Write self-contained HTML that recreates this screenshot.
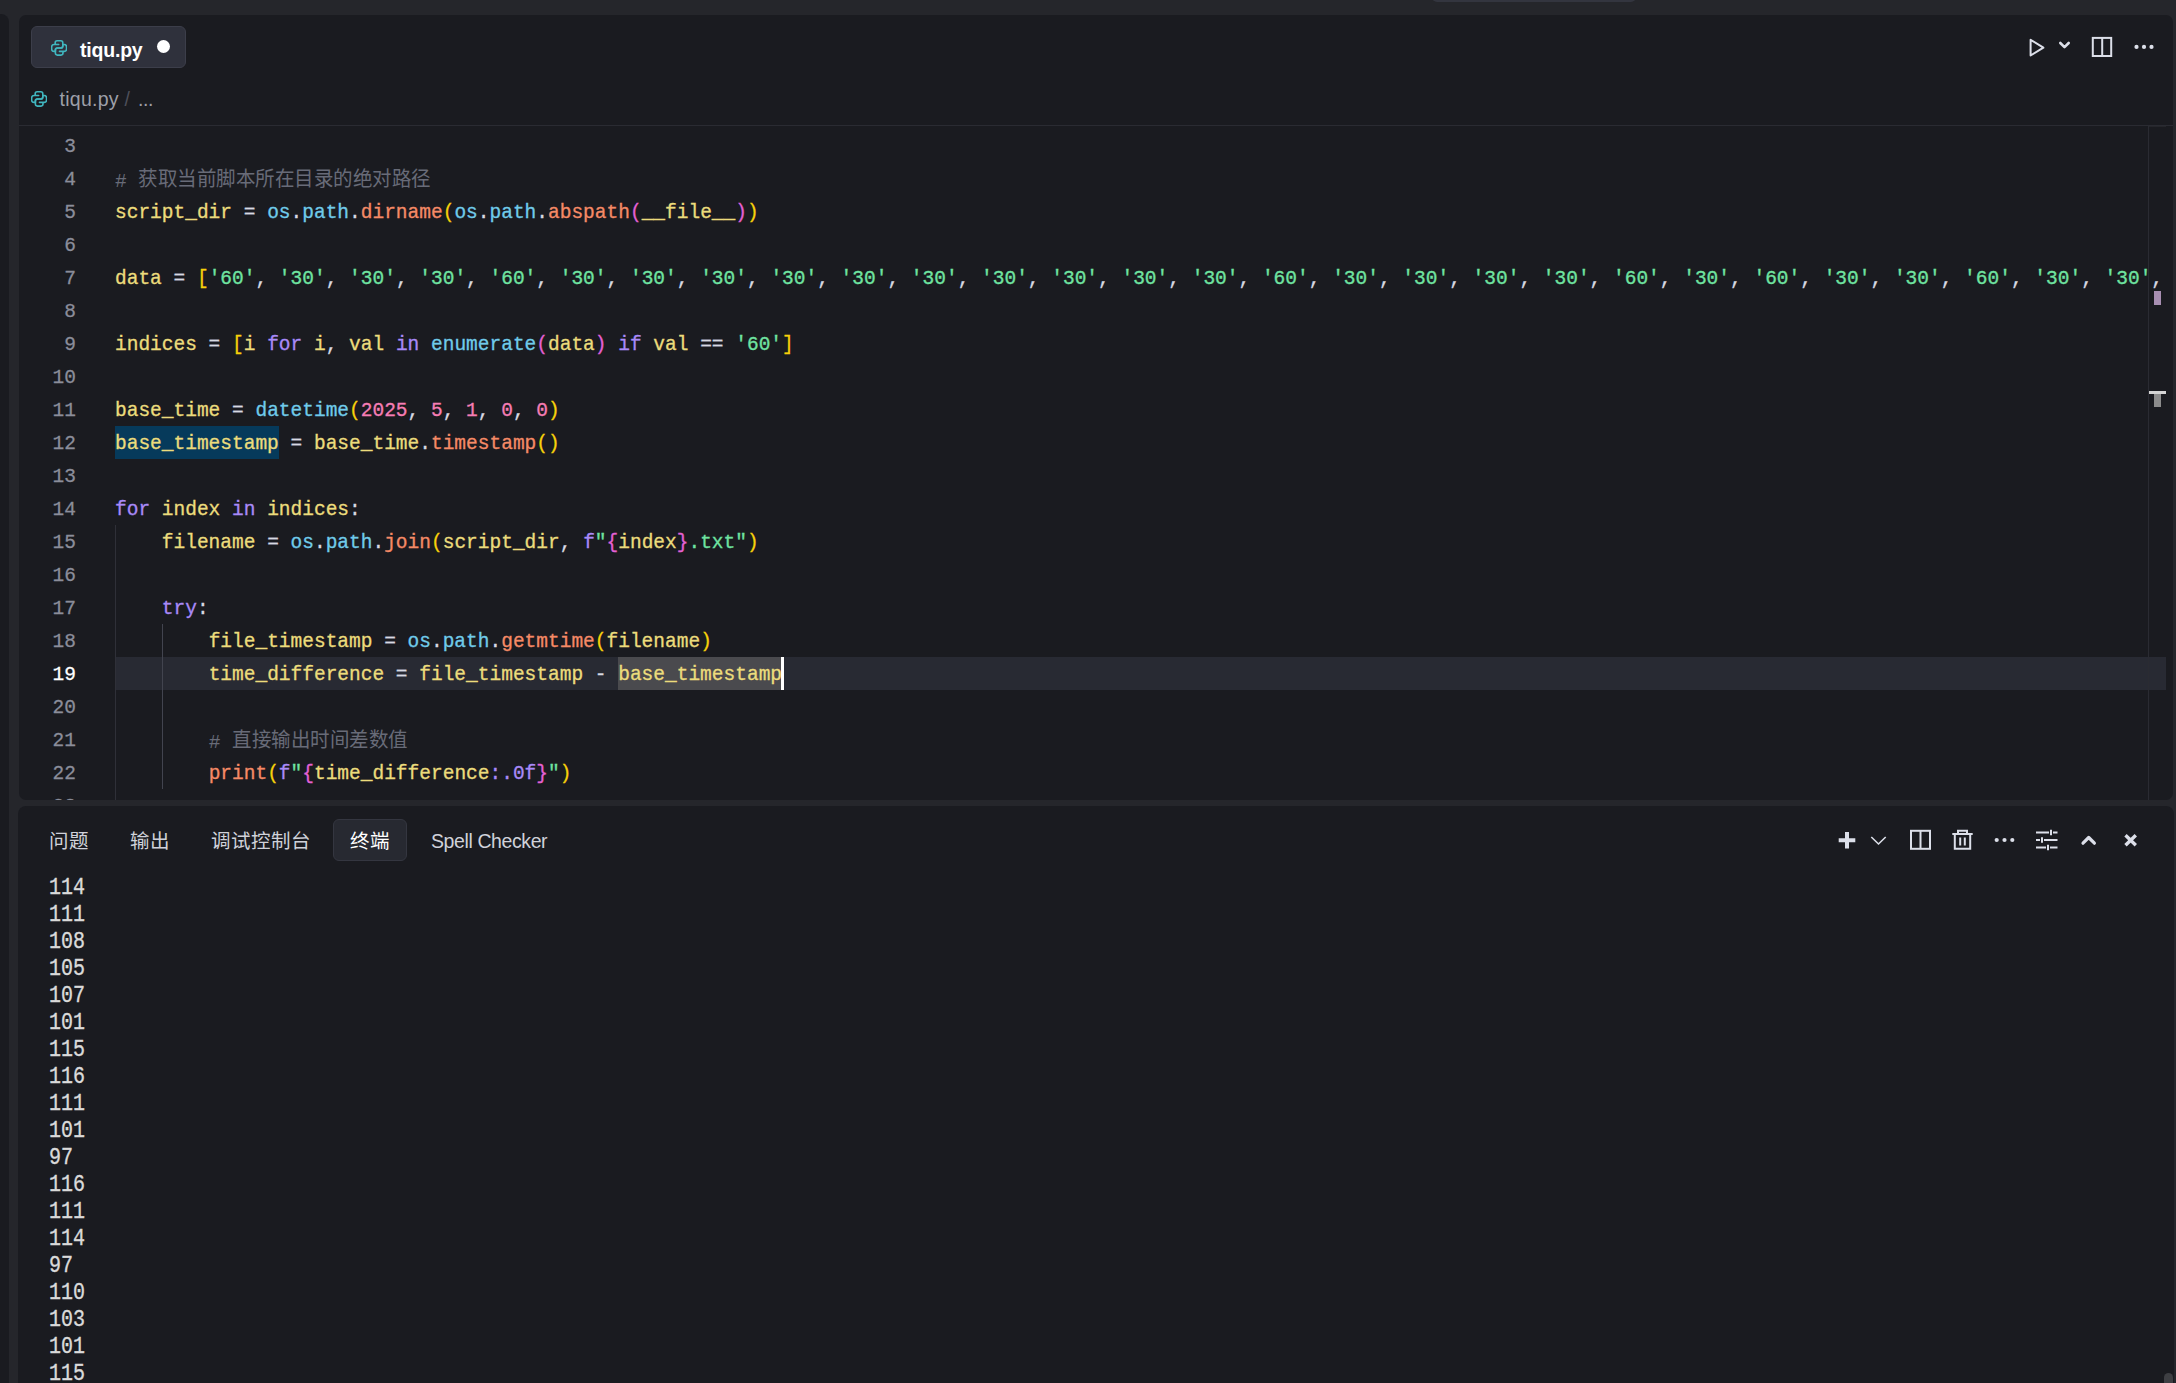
<!DOCTYPE html>
<html lang="zh-CN">
<head>
<meta charset="utf-8">
<title>tiqu.py</title>
<style>
*{box-sizing:border-box;margin:0;padding:0}
html,body{width:2176px;height:1383px;overflow:hidden;background:#25262b}
body{position:relative;font-family:"Liberation Sans",sans-serif;font-size:19.5px;color:#d6d8e0}
.abs{position:absolute}
#leftbar{left:0;top:14px;width:9px;height:1380px;background:#1a1b20;border-top-right-radius:8px}
#topnub{left:1432px;top:-8px;width:204px;height:10px;background:#33353f;border-radius:5px}
#editor{left:19px;top:15px;width:2154px;height:785px;background:#1a1b20;border-radius:7px;overflow:hidden}
#term{left:18px;top:806px;width:2156px;height:600px;background:#1a1b20;border-radius:8px;overflow:hidden}
#tab{left:12px;top:11px;width:155px;height:42px;background:#2f313c;border:1px solid #3c3e4a;border-radius:6px}
#tabname{left:61px;top:23px;font-weight:bold;color:#fff;line-height:24px;letter-spacing:-0.2px;white-space:pre}
#tabdot{left:138.4px;top:25.4px;width:13px;height:13px;border-radius:50%;background:#fff}
.bc{top:72px;color:#9d9fa8;line-height:24px;white-space:pre}
#bcline{left:0;top:110px;width:2154px;height:1px;background:#2a2b32}
#code{left:0;top:114px;width:2147px;height:671px;overflow:hidden;font-family:"Liberation Mono",monospace;font-size:19.5px}
.ln{position:absolute;left:0;width:57px;text-align:right;color:#8b8d9a;height:33px;line-height:33px;white-space:pre;transform:scaleY(1.05);transform-origin:0 21px;-webkit-text-stroke:0.25px currentColor}
.ln.cur{color:#fff}
.cl{position:absolute;left:96px;height:33px;line-height:33px;white-space:pre;color:#ecdc7c;transform:scaleY(1.06);transform-origin:0 21px;-webkit-text-stroke:0.3px currentColor}
.y{color:#ecdc7c}.w{color:#d8dae2}.b{color:#70cbea}.o{color:#f58a66}.g{color:#f7d10a}.m{color:#e460d4}
.s{color:#6fe3a0}.k{color:#a98af8}.n{color:#f67db4}.c{color:#686b78;-webkit-text-stroke:0}.q{color:#6fe3a0}
.cj{font-family:"Liberation Serif",serif;letter-spacing:-0.5px;position:relative;top:-1px}
.guide{position:absolute;width:1px;background:#2f3038}
.ptab{color:#d0d2da;line-height:24px;white-space:pre}
.tl{position:absolute;left:31px;height:27px;line-height:27px;font-family:"Liberation Mono",monospace;font-size:20px;color:#dadada;white-space:pre;transform:scaleY(1.18);transform-origin:0 19px;-webkit-text-stroke:0.3px currentColor}
</style>
</head>
<body>
<div id="leftbar" class="abs"></div>
<div id="topnub" class="abs"></div>

<div id="editor" class="abs">
  <div id="tab" class="abs"></div>
  <svg class="abs" style="left:31.9px;top:25.1px" width="16.2" height="15.9" viewBox="0 0 16.2 15.9" fill="none" stroke="#40b6bf" stroke-width="1.6" stroke-linecap="round" stroke-linejoin="round"><path d="M7.7 4.5H3Q.65 4.5 .65 7V9Q.65 11.4 3 11.4H4.4V9.9Q4.4 7.95 6.4 7.95H9.8Q11.8 7.95 11.8 5.9V2.8Q11.8 .8 9.8 .8H6.2Q4.2 .8 4.2 2.8V4.5"/><path d="M8.5 11.4H13.2Q15.55 11.4 15.55 8.9V6.9Q15.55 4.5 13.2 4.5H11.8V6Q11.8 7.95 9.8 7.95H6.4Q4.4 7.95 4.4 10V13.1Q4.4 15.1 6.4 15.1H10Q12 15.1 12 13.1V11.4"/></svg>
  <div id="tabname" class="abs">tiqu.py</div>
  <div id="tabdot" class="abs"></div>

  <svg class="abs" style="left:12px;top:76px" width="16.2" height="15.9" viewBox="0 0 16.2 15.9" fill="none" stroke="#40b6bf" stroke-width="1.6" stroke-linecap="round" stroke-linejoin="round"><path d="M7.7 4.5H3Q.65 4.5 .65 7V9Q.65 11.4 3 11.4H4.4V9.9Q4.4 7.95 6.4 7.95H9.8Q11.8 7.95 11.8 5.9V2.8Q11.8 .8 9.8 .8H6.2Q4.2 .8 4.2 2.8V4.5"/><path d="M8.5 11.4H13.2Q15.55 11.4 15.55 8.9V6.9Q15.55 4.5 13.2 4.5H11.8V6Q11.8 7.95 9.8 7.95H6.4Q4.4 7.95 4.4 10V13.1Q4.4 15.1 6.4 15.1H10Q12 15.1 12 13.1V11.4"/></svg>
  <div class="abs bc" style="left:40.6px;letter-spacing:0.25px">tiqu.py</div>
  <div class="abs bc" style="left:105.5px;color:#4d4f5a">/</div>
  <div class="abs bc" style="left:119px;letter-spacing:-0.4px">...</div>
  <div id="bcline" class="abs"></div>

  <svg class="abs" style="left:2008px;top:20px" width="140" height="26" viewBox="2027 35 140 26" fill="none" stroke="#dcdfe9" stroke-width="2">
    <path d="M2030.6 39.8V55.5L2043.4 47.7Z" stroke-linejoin="round"/>
    <path d="M2060.3 43L2064.5 47.2L2068.7 43" stroke-width="2.6" stroke-linecap="round" stroke-linejoin="round"/>
    <rect x="2092.8" y="37.9" width="18.4" height="18.1"/>
    <path d="M2102.2 38V56"/>
    <g fill="#dcdfe9" stroke="none"><circle cx="2136.5" cy="46.9" r="2.1"/><circle cx="2144" cy="46.9" r="2.1"/><circle cx="2151.5" cy="46.9" r="2.1"/></g>
  </svg>

  <div id="code" class="abs">
    <div class="abs" style="left:96px;top:528px;width:2051px;height:33px;background:#282a33"></div>
    <div class="abs" style="left:96px;top:297px;width:163.8px;height:33px;background:#063a5b"></div>
    <div class="abs" style="left:599.1px;top:528px;width:163.8px;height:33px;background:#4a4a4e"></div>
    <div class="guide" style="left:96px;top:396px;height:280px"></div>
    <div class="guide" style="left:143px;top:495px;height:165px;background:#42444f"></div>
<div class="ln" style="top:2px">3</div>
<div class="ln" style="top:35px">4</div><div class="cl" style="top:35px"><span class="c"># </span><span class="c cj">获取当前脚本所在目录的绝对路径</span></div>
<div class="ln" style="top:68px">5</div><div class="cl" style="top:68px"><span class="y">script_dir</span><span class="w"> = </span><span class="b">os</span><span class="w">.</span><span class="b">path</span><span class="w">.</span><span class="o">dirname</span><span class="g">(</span><span class="b">os</span><span class="w">.</span><span class="b">path</span><span class="w">.</span><span class="o">abspath</span><span class="m">(</span><span class="y">__file__</span><span class="m">)</span><span class="g">)</span></div>
<div class="ln" style="top:101px">6</div>
<div class="ln" style="top:134px">7</div><div class="cl" style="top:134px"><span class="y">data</span><span class="w"> = </span><span class="g">[</span><span class="s">'60'</span><span class="w">, </span><span class="s">'30'</span><span class="w">, </span><span class="s">'30'</span><span class="w">, </span><span class="s">'30'</span><span class="w">, </span><span class="s">'60'</span><span class="w">, </span><span class="s">'30'</span><span class="w">, </span><span class="s">'30'</span><span class="w">, </span><span class="s">'30'</span><span class="w">, </span><span class="s">'30'</span><span class="w">, </span><span class="s">'30'</span><span class="w">, </span><span class="s">'30'</span><span class="w">, </span><span class="s">'30'</span><span class="w">, </span><span class="s">'30'</span><span class="w">, </span><span class="s">'30'</span><span class="w">, </span><span class="s">'30'</span><span class="w">, </span><span class="s">'60'</span><span class="w">, </span><span class="s">'30'</span><span class="w">, </span><span class="s">'30'</span><span class="w">, </span><span class="s">'30'</span><span class="w">, </span><span class="s">'30'</span><span class="w">, </span><span class="s">'60'</span><span class="w">, </span><span class="s">'30'</span><span class="w">, </span><span class="s">'60'</span><span class="w">, </span><span class="s">'30'</span><span class="w">, </span><span class="s">'30'</span><span class="w">, </span><span class="s">'60'</span><span class="w">, </span><span class="s">'30'</span><span class="w">, </span><span class="s">'30'</span><span class="w">, </span><span class="s">'30'</span><span class="w">, </span><span class="s">'30'</span><span class="w">, </span></div>
<div class="ln" style="top:167px">8</div>
<div class="ln" style="top:200px">9</div><div class="cl" style="top:200px"><span class="y">indices</span><span class="w"> = </span><span class="g">[</span><span class="y">i</span> <span class="k">for</span> <span class="y">i</span><span class="w">, </span><span class="y">val</span> <span class="k">in</span> <span class="b">enumerate</span><span class="m">(</span><span class="y">data</span><span class="m">)</span> <span class="k">if</span> <span class="y">val</span><span class="w"> == </span><span class="s">'60'</span><span class="g">]</span></div>
<div class="ln" style="top:233px">10</div>
<div class="ln" style="top:266px">11</div><div class="cl" style="top:266px"><span class="y">base_time</span><span class="w"> = </span><span class="b">datetime</span><span class="g">(</span><span class="n">2025</span><span class="w">, </span><span class="n">5</span><span class="w">, </span><span class="n">1</span><span class="w">, </span><span class="n">0</span><span class="w">, </span><span class="n">0</span><span class="g">)</span></div>
<div class="ln" style="top:299px">12</div><div class="cl" style="top:299px"><span class="y">base_timestamp</span><span class="w"> = </span><span class="y">base_time</span><span class="w">.</span><span class="o">timestamp</span><span class="g">()</span></div>
<div class="ln" style="top:332px">13</div>
<div class="ln" style="top:365px">14</div><div class="cl" style="top:365px"><span class="k">for</span> <span class="y">index</span> <span class="k">in</span> <span class="y">indices</span><span class="w">:</span></div>
<div class="ln" style="top:398px">15</div><div class="cl" style="top:398px">    <span class="y">filename</span><span class="w"> = </span><span class="b">os</span><span class="w">.</span><span class="b">path</span><span class="w">.</span><span class="o">join</span><span class="g">(</span><span class="y">script_dir</span><span class="w">, </span><span class="k">f</span><span class="q">"</span><span class="m">{</span><span class="y">index</span><span class="m">}</span><span class="s">.txt</span><span class="q">"</span><span class="g">)</span></div>
<div class="ln" style="top:431px">16</div>
<div class="ln" style="top:464px">17</div><div class="cl" style="top:464px">    <span class="k">try</span><span class="w">:</span></div>
<div class="ln" style="top:497px">18</div><div class="cl" style="top:497px">        <span class="y">file_timestamp</span><span class="w"> = </span><span class="b">os</span><span class="w">.</span><span class="b">path</span><span class="w">.</span><span class="o">getmtime</span><span class="g">(</span><span class="y">filename</span><span class="g">)</span></div>
<div class="ln cur" style="top:530px">19</div><div class="cl" style="top:530px">        <span class="y">time_difference</span><span class="w"> = </span><span class="y">file_timestamp</span><span class="w"> - </span><span class="y">base_timestamp</span></div>
<div class="ln" style="top:563px">20</div>
<div class="ln" style="top:596px">21</div><div class="cl" style="top:596px">        <span class="c"># </span><span class="c cj">直接输出时间差数值</span></div>
<div class="ln" style="top:629px">22</div><div class="cl" style="top:629px">        <span class="o">print</span><span class="g">(</span><span class="k">f</span><span class="q">"</span><span class="m">{</span><span class="y">time_difference</span><span class="k">:.0f</span><span class="m">}</span><span class="q">"</span><span class="g">)</span></div>
<div class="ln" style="top:662px">23</div>
    <div class="abs" style="left:761.5px;top:528px;width:3px;height:33px;background:#fff"></div>
  </div>
  <div class="abs" style="left:2129px;top:111px;width:1px;height:674px;background:#2a2b32"></div>
  <div class="abs" style="left:2130px;top:111px;width:17px;height:1px;background:#25262b"></div>
  <div class="abs" style="left:2135px;top:276px;width:7px;height:14px;background:#a88fb2"></div>
  <div class="abs" style="left:2130px;top:376px;width:17px;height:3px;background:#d4d4d4"></div>
  <div class="abs" style="left:2135px;top:379px;width:7px;height:13px;background:#8c8c8c"></div>
</div>

<div id="term" class="abs">
  <div class="abs" style="left:1px;top:2px">
  <div class="abs ptab" style="left:30px;top:21px">问题</div>
  <div class="abs ptab" style="left:111px;top:21px">输出</div>
  <div class="abs ptab" style="left:192px;top:21px">调试控制台</div>
  <div class="abs" style="left:314px;top:11px;width:74px;height:42px;background:#272931;border:1px solid #343640;border-radius:6px"></div>
  <div class="abs ptab" style="left:331px;top:21px;color:#fff">终端</div>
  <div class="abs ptab" style="left:412px;top:21px;letter-spacing:-0.4px">Spell Checker</div>
  <svg class="abs" style="left:1811px;top:12px" width="320" height="40" viewBox="1830 820 320 40" fill="none" stroke="#dcdfe9" stroke-width="2">
    <path d="M1847 832V848.5M1838.7 840.2H1855.3" stroke-width="4"/>
    <path d="M1871.3 837L1878.5 844L1885.7 837" stroke-width="1.6"/>
    <rect x="1911" y="830.8" width="19" height="18"/><path d="M1920.5 831V849"/>
    <path d="M1952.3 834H1972.7M1958 833.5V830.8H1967V833.5M1954.8 834.5V848.8H1970.2V834.5M1960.2 837.5V845.5M1964.8 837.5V845.5"/>
    <g fill="#dcdfe9" stroke="none"><circle cx="1996.7" cy="840" r="2.1"/><circle cx="2004.5" cy="840" r="2.1"/><circle cx="2012.3" cy="840" r="2.1"/></g>
    <path d="M2036 832.5H2049M2053 832.5H2057.5M2051 829.8V835.2M2036 840H2040M2044 840H2057.5M2042 837.3V842.7M2036 847.5H2046M2050 847.5H2057.5M2048 844.8V850.2"/>
    <path d="M2083 843.2L2088.7 837.5L2094.4 843.2" stroke-width="3.2" stroke-linecap="round" stroke-linejoin="round"/>
    <path d="M2125.5 835.2L2135.8 845.2M2135.8 835.2L2125.5 845.2" stroke-width="3.4"/>
  </svg>
  </div>
<div class="tl" style="top:69px">114</div>
<div class="tl" style="top:96px">111</div>
<div class="tl" style="top:123px">108</div>
<div class="tl" style="top:150px">105</div>
<div class="tl" style="top:177px">107</div>
<div class="tl" style="top:204px">101</div>
<div class="tl" style="top:231px">115</div>
<div class="tl" style="top:258px">116</div>
<div class="tl" style="top:285px">111</div>
<div class="tl" style="top:312px">101</div>
<div class="tl" style="top:339px">97</div>
<div class="tl" style="top:366px">116</div>
<div class="tl" style="top:393px">111</div>
<div class="tl" style="top:420px">114</div>
<div class="tl" style="top:447px">97</div>
<div class="tl" style="top:474px">110</div>
<div class="tl" style="top:501px">103</div>
<div class="tl" style="top:528px">101</div>
<div class="tl" style="top:555px">115</div>
  <div class="abs" style="left:2146px;top:567px;width:9px;height:40px;background:#3e3f43;border-radius:4.5px"></div>
</div>
</body>
</html>
